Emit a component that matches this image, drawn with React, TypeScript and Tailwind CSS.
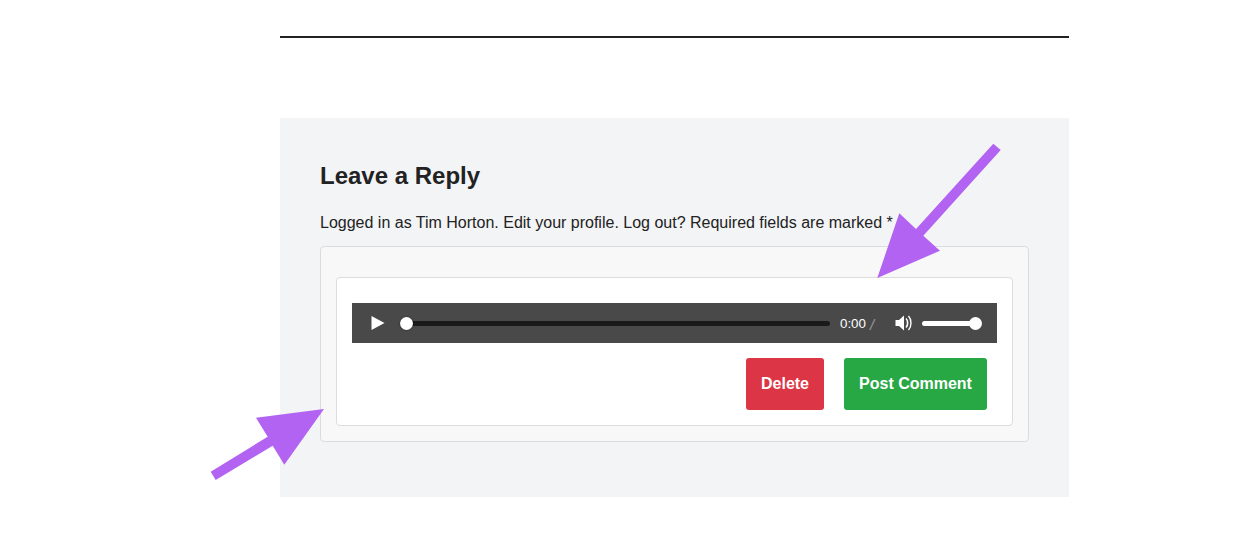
const FONT = "font-['Liberation_Sans',Arial,sans-serif]";

function AudioPlayer() {
  return (
    <div className="flex h-10 items-center bg-[#494949] pl-[19px] pr-[15px]">
      <svg width="14" height="16" viewBox="0 0 14 16" className="shrink-0">
        <path d="M0.5 1 L13.5 8 L0.5 15 Z" fill="#fff" />
      </svg>
      <div className="relative ml-[15px] h-[5px] w-[430px] shrink-0 rounded-full bg-[#1a1a1a]">
        <span className="absolute left-0 top-[-4px] h-[13px] w-[13px] rounded-full bg-white shadow-[0_0_2px_rgba(0,0,0,0.5)]" />
      </div>
      <span className="ml-[10px] mt-[2px] text-[13.33px] leading-none text-white">0:00</span>
      <span className="ml-[4px] mt-[2px] text-[15px] italic leading-none text-[#999]">/</span>
      <svg width="18" height="18" viewBox="0 0 18 18" className="ml-[21px] shrink-0">
        <path d="M0.5 6 H4 L9 1.5 V16.5 L4 12 H0.5 Z" fill="#fff" />
        <path d="M11 4.5 C13.2 6.5 13.2 11.5 11 13.5" fill="none" stroke="#fff" strokeWidth="1.6" />
        <path d="M13.5 2 C16.8 5.5 16.8 12.5 13.5 16" fill="none" stroke="#fff" strokeWidth="1.4" />
      </svg>
      <div className="relative ml-[9px] h-[5px] w-[54px] shrink-0 rounded-full bg-white">
        <span className="absolute right-[-6px] top-[-4px] h-[13px] w-[13px] rounded-full bg-white" />
      </div>
    </div>
  );
}

export default function App() {
  return (
    <div className={`relative h-[550px] overflow-hidden bg-white ${FONT}`}>
      <div className="ml-[280px] w-[789px] pt-9">
        <div className="h-[2px] bg-[#222]" />
        <section className="mt-20 h-[379px] bg-[#f3f4f6] px-10 pt-[43px]">
          <h2 className="text-2xl font-bold leading-[30px] text-[#222]">Leave a Reply</h2>
          <p className="mt-[20px] text-base leading-[24px] text-[#222]">
            Logged in as Tim Horton. Edit your profile. Log out? Required fields are marked *
          </p>
          <div className="mt-[11px] rounded border border-[#dcdcde] bg-[#f8f8f8] p-[15px] pt-[30px]">
            <div className="rounded border border-[#dcdcde] bg-white p-[15px] pt-[25px]">
              <AudioPlayer />
              <div className="mt-[15px] flex justify-end gap-5 pr-[10px]">
                <button className="h-[52px] w-[78px] rounded-[3px] bg-[#dc3545] text-base font-bold text-white">
                  Delete
                </button>
                <button className="h-[52px] w-[143px] rounded-[3px] bg-[#28a745] text-base font-bold text-white">
                  Post Comment
                </button>
              </div>
            </div>
          </div>
        </section>
      </div>

      {/* annotation arrows */}
      <svg width="1251" height="550" className="pointer-events-none absolute left-0 top-0">
        <path
          d="M210.7 471.7 L267.7 436.7 L256 417.7 L324 409 L284.3 464.7 L272.7 445.7 L215.7 480 Z"
          fill="#b263f2"
        />
        <path
          d="M993.3 143.7 L1000.7 150 L923.3 235.7 L940 250.7 L877.3 278 L899.3 213.3 L916 229 Z"
          fill="#b263f2"
        />
      </svg>
    </div>
  );
}
